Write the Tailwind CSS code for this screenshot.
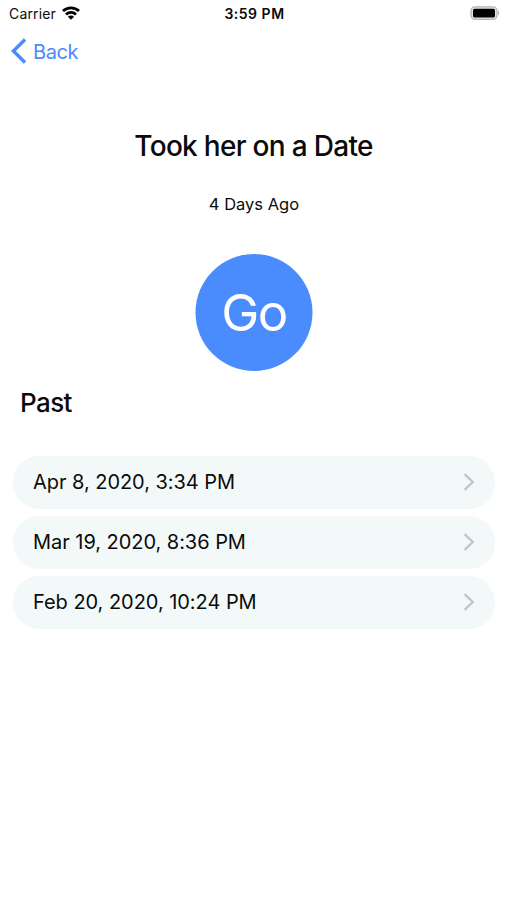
<!DOCTYPE html>
<html lang="en">
<head>
<meta charset="utf-8">
<meta name="viewport" content="width=device-width, initial-scale=1">
<title>Took her on a Date</title>
<script src="https://cdn.jsdelivr.net/npm/@tailwindcss/browser@4"></script>
</head>
<body class="bg-white">
<div class="flex h-[900px] w-[507px] flex-col overflow-hidden bg-white font-['Inter',sans-serif] text-[#0b0b0b]">
  <header class="grid h-[27px] grid-cols-3 items-center pl-[9px] pr-[7px] text-[14px] leading-[27px]">
    <div class="flex items-center gap-[6px]">
      <span class="tracking-[0.15px]">Carrier</span>
      <svg class="mb-[2px] h-[14px] w-[18px]" viewBox="0 0 18 14" fill="none" stroke="#000" stroke-width="2.8"><path d="M1 5.1a11.4 11.4 0 0 1 16 0M4 8.4a7.1 7.1 0 0 1 10 0"/><path d="M9 13.8 5.9 10.8a4.3 4.3 0 0 1 6.2 0z" fill="#000" stroke="none"/></svg>
    </div>
    <span class="text-center font-semibold tracking-[0.5px]">3:59 PM</span>
    <svg class="mb-[1px] h-[16px] w-[32px] justify-self-end" viewBox="0 0 32 16"><rect x="3" y="1.8" width="26" height="12.6" rx="4" fill="#e4e4e4" stroke="#b4b4b4" stroke-width="1.3"/><rect x="5" y="3.7" width="22" height="8.8" rx="1.6" fill="#000"/><path d="M30 5.6q2.4 2.4 0 4.8z" fill="#b0b0b0"/></svg>
  </header>
  <nav class="flex h-[50px] items-center gap-[7px] pl-[11px] text-[#4a8bfd]">
    <svg class="mb-[2px] h-[26px] w-[15px]" viewBox="0 0 15 26" fill="none" stroke="currentColor" stroke-width="3.5"><path d="M14 1.5 2.4 13 14 24.5"/></svg>
    <span class="text-[20px] leading-[26px] tracking-[-0.4px]">Back</span>
  </nav>
  <main class="flex flex-col">
    <h1 class="mt-[51px] text-center text-[28px] font-medium leading-[36px] tracking-[-0.7px]">Took her on a Date</h1>
    <p class="mt-[28px] pl-px text-center text-[16.5px] leading-[24px]">4 Days Ago</p>
    <button class="mt-[38px] flex size-[117px] translate-x-[0.5px] items-center justify-center self-center rounded-full bg-[#4a8bfd] text-[51px] font-normal leading-none tracking-[-1.5px] text-white">Go</button>
    <h2 class="mt-[15px] pl-[20px] text-[26px] font-medium leading-[34px] tracking-[-0.6px]">Past</h2>
    <ul class="mt-[36px] flex flex-col gap-[7px] pl-[13px] pr-[12px] text-[20px] tracking-[-0.04px]">
      <li class="flex h-[53px] items-center justify-between rounded-[26px] bg-[#f2f9f8] pb-[1px] pl-[20px] pr-[20px]"><span>Apr 8, 2020, 3:34 PM</span><svg class="h-[18px] w-[12px]" viewBox="0 0 12 18" fill="none" stroke="#c1c5c5" stroke-width="2.3"><path d="m1.5 1.2 8.3 7.8-8.3 7.8"/></svg></li>
      <li class="flex h-[53px] items-center justify-between rounded-[26px] bg-[#f2f9f8] pb-[1px] pl-[20px] pr-[20px]"><span>Mar 19, 2020, 8:36 PM</span><svg class="h-[18px] w-[12px]" viewBox="0 0 12 18" fill="none" stroke="#c1c5c5" stroke-width="2.3"><path d="m1.5 1.2 8.3 7.8-8.3 7.8"/></svg></li>
      <li class="flex h-[53px] items-center justify-between rounded-[26px] bg-[#f2f9f8] pb-[1px] pl-[20px] pr-[20px]"><span>Feb 20, 2020, 10:24 PM</span><svg class="h-[18px] w-[12px]" viewBox="0 0 12 18" fill="none" stroke="#c1c5c5" stroke-width="2.3"><path d="m1.5 1.2 8.3 7.8-8.3 7.8"/></svg></li>
    </ul>
  </main>
</div>
</body>
</html>
